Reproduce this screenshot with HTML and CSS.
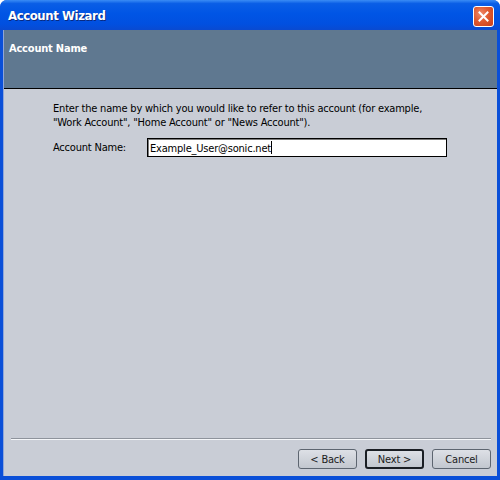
FILE: index.html
```html
<!DOCTYPE html>
<html lang="en">
<head>
    <meta charset="UTF-8">
    <title>Account Wizard</title>
    <link rel="stylesheet" href="styles.css">
</head>
<body>
    <div class="window">
        <div class="titlebar">
            <span class="title">Account Wizard</span>
            <button class="close" aria-label="Close">
                <svg width="11" height="11" viewBox="0 0 11 11">
                    <path d="M1.5 1.5 L9.5 9.5 M9.5 1.5 L1.5 9.5" stroke="#fff" stroke-width="2" stroke-linecap="square"/>
                </svg>
            </button>
        </div>
        <div class="frame">
            <div class="page-header">Account Name</div>
            <div class="page-body">
                <p class="intro">Enter the name by which you would like to refer to this account (for example, "Work Account", "Home Account" or "News Account").</p>
                <div class="field">
                    <label for="acct-name">Account Name:</label>
                    <div class="input">Example_User@sonic.net<span class="caret"></span></div>
                </div>
            </div>
            <div class="footer">
                <hr class="sep">
                <div class="buttons">
                    <button class="btn">&lt; Back</button>
                    <button class="btn default">Next &gt;</button>
                    <button class="btn">Cancel</button>
                </div>
            </div>
        </div>
    </div>
</body>
</html>
```

FILE: styles.css
```css
* {
    box-sizing: border-box;
    margin: 0;
    padding: 0;
}

body {
    width: 500px;
    height: 480px;
    overflow: hidden;
    font-family: "DejaVu Sans Condensed", "Liberation Sans", sans-serif;
    font-size: 11px;
    letter-spacing: -0.2px;
    color: #000;
}

.window {
    width: 500px;
    height: 480px;
    display: flex;
    flex-direction: column;
    background: #0a4fd8;
    border-radius: 7px 7px 0 0;
    overflow: hidden;
}

/* blue XP caption */
.titlebar {
    height: 30px;
    flex: none;
    display: flex;
    align-items: center;
    justify-content: space-between;
    padding: 0 6px 0 8px;
    background: linear-gradient(to bottom, #3a8cf5 0%, #0a5ee6 12%, #0055e5 45%, #0150e0 80%, #0a4ad0 100%);
}

.title {
    color: #fff;
    font-weight: bold;
    font-size: 13px;
    letter-spacing: -0.4px;
    text-shadow: 1px 1px 0 #0a2a80;
}

.close {
    width: 21px;
    height: 21px;
    border: 1px solid #fff;
    border-radius: 3px;
    background: radial-gradient(circle at 35% 35%, #f08a6a 0%, #e05a30 45%, #c83e1a 100%);
    display: flex;
    align-items: center;
    justify-content: center;
    margin-top: 2px;
}

.frame {
    flex: 1;
    margin: 0 3px 4px 3px;
    display: flex;
    flex-direction: column;
    background: #c9cdd6;
    border-left: 1px solid #8fa6d8;
}

.page-header {
    height: 59px;
    background: #5f7890;
    color: #fff;
    font-weight: bold;
    padding: 12px 0 0 5px;
    border-bottom: 1px solid #000;
}

.page-body {
    flex: 1;
    padding: 13px 0 0 49px;
}

.intro {
    width: 390px;
    line-height: 14px;
}

.field {
    display: flex;
    align-items: center;
    margin-top: 8px;
}

.field label {
    width: 94px;
}

.input {
    width: 300px;
    height: 19px;
    background: #fff;
    border: 1px solid #000;
    box-shadow: inset 1px 1px 0 #7a7a7a;
    padding: 2px 0 0 2px;
    line-height: 14px;
}

.caret {
    display: inline-block;
    width: 1px;
    height: 13px;
    background: #000;
    vertical-align: -2px;
}

.footer {
    padding: 0 6px 7px 6px;
}

.sep {
    border: none;
    border-top: 1px solid #8e939c;
    border-bottom: 1px solid #f4f6f9;
    margin: 0 0 9px 1px;
}

.buttons {
    display: flex;
    justify-content: flex-end;
    gap: 8px;
}

.btn {
    width: 59px;
    height: 20px;
    font-family: inherit;
    font-size: 11px;
    letter-spacing: inherit;
    color: #202020;
    background: linear-gradient(to bottom, #dde0e6, #c2c7cf);
    border: 1px solid #5d6570;
    border-radius: 3px;
}

.btn.default {
    border: 2px solid #1a1e24;
}
```
